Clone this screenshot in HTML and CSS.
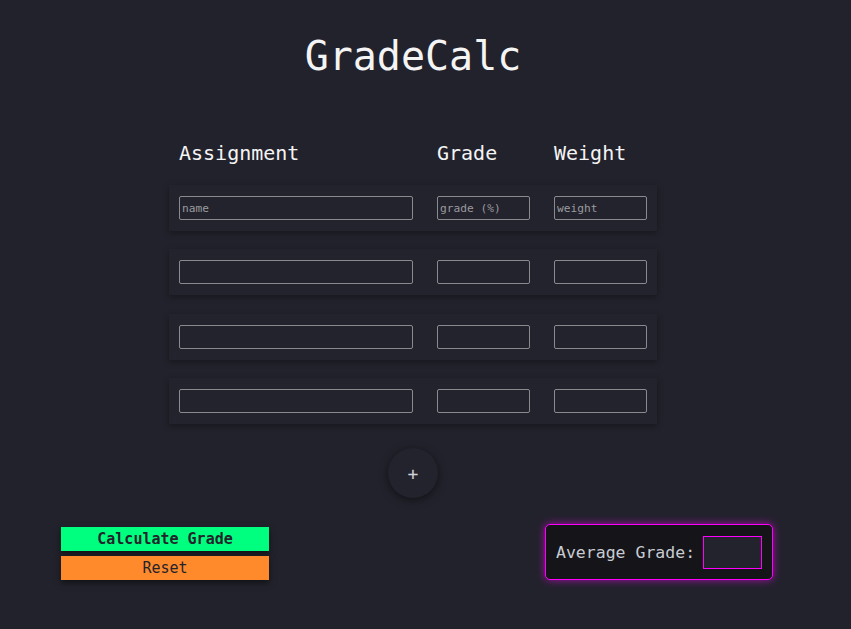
FILE: index.html
```html
<!DOCTYPE html>
<html>
<head>
<meta charset="utf-8">
<link rel="stylesheet" href="styles.css">
</head>
<body>
<main class="app">
  <h1 class="title">GradeCalc</h1>
  <div class="grid head">
    <span>Assignment</span>
    <span>Grade</span>
    <span>Weight</span>
  </div>
  <div class="rows">
    <div class="grid row">
      <input class="field" placeholder="name">
      <input class="field" placeholder="grade (%)">
      <input class="field" placeholder="weight">
    </div>
    <div class="grid row">
      <input class="field">
      <input class="field">
      <input class="field">
    </div>
    <div class="grid row">
      <input class="field">
      <input class="field">
      <input class="field">
    </div>
    <div class="grid row">
      <input class="field">
      <input class="field">
      <input class="field">
    </div>
  </div>
  <div class="add-wrap"><button class="add">+</button></div>
  <div class="bottom">
    <div class="actions">
      <button class="btn calc">Calculate Grade</button>
      <button class="btn reset">Reset</button>
    </div>
    <div class="avg">
      <span class="avg-label">Average Grade:</span>
      <div class="avg-out"></div>
    </div>
  </div>
</main>
</body>
</html>
```
FILE: styles.css
```css
html, body {
  margin: 0;
  padding: 0;
  background: #22222c;
  height: 100%;
}
body {
  font-family: "DejaVu Sans Mono", monospace;
  color: #f2f2f2;
}
.app {
  width: 826px;
  padding-top: 32px;
}
.title {
  margin: 0;
  font-size: 40px;
  line-height: 48px;
  font-weight: normal;
  text-align: center;
  color: #f4f4f4;
}
.grid {
  display: grid;
  grid-template-columns: 234px 93px 93px;
  column-gap: 24px;
  width: 488px;
  box-sizing: border-box;
  padding: 0 10px;
  margin: 0 auto;
}
.head {
  margin-top: 61px;
  font-size: 20px;
  line-height: 24px;
  color: #f4f4f4;
}
.rows {
  margin-top: 20px;
  display: flex;
  flex-direction: column;
  gap: 18.4px;
}
.row {
  height: 46px;
  align-items: center;
  background: #23232d;
  box-shadow: 0 2px 6px rgba(0, 0, 0, 0.35);
}
.field {
  box-sizing: border-box;
  height: 24px;
  width: 100%;
  margin: 0;
  padding: 1px 2px;
  background: transparent;
  border: 1px solid #8a8a8e;
  border-radius: 2px;
  font-family: "DejaVu Sans Mono", monospace;
  font-size: 11.2px;
  color: #ddd;
  outline: none;
}
.field::placeholder {
  color: #9a9a9e;
}
.add-wrap {
  display: flex;
  justify-content: center;
  margin-top: 24px;
}
.add {
  width: 50px;
  height: 50px;
  border-radius: 50%;
  border: none;
  background: #23232d;
  box-shadow: 0 2px 8px rgba(0, 0, 0, 0.5);
  color: #d0d0d8;
  font-family: "DejaVu Sans Mono", monospace;
  font-size: 18px;
  padding: 0;
}
.bottom {
  margin-top: 26px;
  display: flex;
  justify-content: space-between;
  align-items: flex-end;
  padding: 0 53px 0 61px;
}
.actions {
  display: flex;
  flex-direction: column;
  gap: 5px;
}
.btn {
  width: 208px;
  height: 24px;
  border: none;
  padding: 0;
  font-family: "DejaVu Sans Mono", monospace;
  font-size: 15px;
  color: #23232b;
  box-shadow: 0 3px 6px rgba(0, 0, 0, 0.5);
}
.calc {
  background: #00ff7f;
  font-weight: bold;
}
.reset {
  background: #ff8a2b;
}
.avg {
  display: flex;
  align-items: center;
  gap: 8px;
  box-sizing: border-box;
  width: 228px;
  height: 56px;
  padding: 0 10px 0 10px;
  background: #141419;
  border: 1px solid #ff00ff;
  border-radius: 5px;
  box-shadow: 0 0 8px rgba(255, 0, 255, 0.6);
}
.avg-label {
  font-size: 16.5px;
  color: #c8ccd2;
  white-space: nowrap;
}
.avg-out {
  box-sizing: border-box;
  width: 59px;
  height: 33px;
  border: 1px solid #ff00ff;
  background: #23232d;
}
```
